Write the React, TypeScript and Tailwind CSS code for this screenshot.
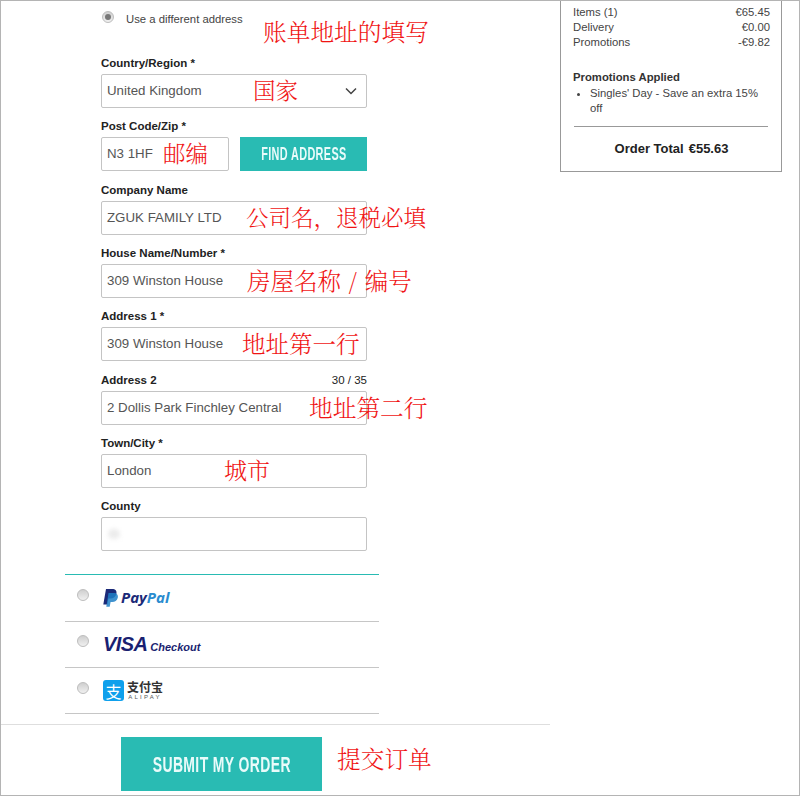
import React from "react";

const arial = "font-['Liberation_Sans',Arial,sans-serif]";
const labelCls = "h-[18px] w-[266px] flex items-start justify-between text-[11.5px] font-bold leading-[14px] text-[#222]";
const inputCls = "h-[34px] w-[266px] flex items-center rounded-[2px] border border-[#c4c4c4] bg-white px-[5px] text-[13.3px] text-[#555]";
const noteBase = "absolute text-[#f01414] whitespace-nowrap font-['Noto_Serif_CJK_SC','Noto_Sans_CJK_SC',sans-serif] font-light leading-none";

function Field({ label, value, right, children }: { label: string; value?: string; right?: string; children?: React.ReactNode }) {
  return (
    <div className="flex flex-col">
      <div className={labelCls}>
        <span>{label}</span>
        {right && <span className="font-normal text-[#222]">{right}</span>}
      </div>
      <div className={inputCls}>{value}{children}</div>
    </div>
  );
}

function Radio({ checked }: { checked?: boolean }) {
  return (
    <span className="flex h-[12px] w-[12px] shrink-0 items-center justify-center rounded-full border border-[#bdbdbd] bg-gradient-to-b from-[#cfcfcf] to-[#f0f0f0]">
      {checked && <span className="h-[6px] w-[6px] rounded-full bg-[#777]" />}
    </span>
  );
}

function PayRow({ children, radioTop }: { children: React.ReactNode; radioTop: string }) {
  return (
    <div className="flex h-[46.33px] border-b border-[#c6c6c6] pl-[12px]">
      <div className={radioTop}><Radio /></div>
      <div className="ml-[14px] flex items-center">{children}</div>
    </div>
  );
}

export default function App() {
  return (
    <div className={`relative h-[796px] w-[800px] overflow-hidden border border-[#b4b4b4] bg-white ${arial}`}>
      <div className="flex items-start">
        {/* left column */}
        <div className="w-[548px]">
          <div className="flex items-start pl-[101px] pt-[10px]">
            <Radio checked />
            <span className="ml-[12px] mt-[1px] text-[11.3px] leading-[14px] text-[#444]">Use a different address</span>
          </div>
          <div className="mt-[30px] flex flex-col gap-[11.33px] pl-[100px]">
            <div className="flex flex-col">
              <div className={labelCls}><span>Country/Region *</span></div>
              <div className={`${inputCls} justify-between`}>
                <span>United Kingdom</span>
                <svg width="12" height="8" viewBox="0 0 12 8" className="mr-[4px]" fill="none" stroke="#444" strokeWidth="1.5"><path d="M1 1.5 6 6.5 11 1.5" /></svg>
              </div>
            </div>
            <div className="flex flex-col">
              <div className={labelCls}><span>Post Code/Zip *</span></div>
              <div className="flex gap-[11px]">
                <div className={`${inputCls} !w-[128px]`}>N3 1HF</div>
                <div className="flex h-[34px] w-[127px] items-center justify-center overflow-hidden bg-[#29bbb3] text-[#e9fbfa]">
                  <span className="scale-x-[0.62] whitespace-nowrap text-[17.5px] font-bold tracking-[0.6px]">FIND ADDRESS</span>
                </div>
              </div>
            </div>
            <Field label="Company Name" value="ZGUK FAMILY LTD" />
            <Field label="House Name/Number *" value="309 Winston House" />
            <Field label="Address 1 *" value="309 Winston House" />
            <Field label="Address 2" right="30 / 35" value="2 Dollis Park Finchley Central" />
            <Field label="Town/City *" value="London" />
            <Field label="County">
              <span className="ml-[1px] h-[10px] w-[12px] rounded-full bg-[#ececec] blur-[2px]" />
            </Field>
          </div>

          <div className="ml-[64px] mt-[23px] w-[314px]">
            <div className="h-[1px] bg-[#29bbb3]" />
            <PayRow radioTop="mt-[14px]">
              <span className="flex items-center gap-[3px]">
                <svg width="15" height="18" viewBox="0 0 15 18">
                  <path d="M3 0h6c3.600 0 5 2 4.400 4.800C12.700 8 10.500 9.600 7.500 9.600H5.400L4.400 15.500H0.300Z" fill="#1b2a78" />
                  <path d="M5.500 4h6.800c2.300 1 3 2.800 2.400 5-.7 2.800-2.800 4-5.400 4H7.600L6.700 17.800H3.300L5.500 4Z" fill="#1f7fc6" fillOpacity=".85" />
                </svg>
                <span className="font-['Open_Sans',sans-serif] text-[15px] font-bold italic leading-none"><span className="text-[#1b2a78]">Pay</span><span className="text-[#2a8ccf]">Pal</span></span>
              </span>
            </PayRow>
            <PayRow radioTop="mt-[13px]">
              <span className="flex items-baseline gap-[3px] italic text-[#1a1f71]">
                <span className="text-[20px] font-bold leading-none tracking-[-0.6px]">VISA</span>
                <span className="text-[11px] font-bold leading-none">Checkout</span>
              </span>
            </PayRow>
            <PayRow radioTop="mt-[14px]">
              <span className="flex items-center gap-[3px]">
                <span className="flex h-[21px] w-[21px] items-center justify-center rounded-[3px] bg-[#0fa0ec] font-['Noto_Sans_CJK_SC',sans-serif] text-[16px] leading-none text-white">支</span>
                <span className="flex flex-col items-center">
                  <span className="font-['Noto_Sans_CJK_SC',sans-serif] text-[12px] font-bold leading-[12px] text-[#333]">支付宝</span>
                  <span className="mt-[1px] text-[6px] leading-[7px] tracking-[2.2px] text-[#555]">ALIPAY</span>
                </span>
              </span>
            </PayRow>
          </div>

          <div className="mt-[10px] w-[549px] border-t border-[#dedede] pb-[4px] pl-[120px] pt-[12px]">
            <div className="flex h-[54px] w-[201px] items-center justify-center overflow-hidden bg-[#29bbb3] text-[#e9fbfa]">
              <span className="scale-x-[0.635] whitespace-nowrap text-[22px] font-bold tracking-[0.6px]">SUBMIT MY ORDER</span>
            </div>
          </div>
        </div>

        {/* summary */}
        <div className="ml-[11px] h-[171px] w-[222px] border-x border-b border-[#999] pl-[12px] pr-[11px] pt-[4px] text-[11.3px] leading-[15px] text-[#444]">
          <div className="flex justify-between"><span>Items (1)</span><span>€65.45</span></div>
          <div className="flex justify-between"><span>Delivery</span><span>€0.00</span></div>
          <div className="flex justify-between"><span>Promotions</span><span>-€9.82</span></div>
          <div className="mt-[20px] font-bold text-[#333]">Promotions Applied</div>
          <ul className="mt-[1px] list-disc pl-[17px]">
            <li>Singles' Day - Save an extra 15% off</li>
          </ul>
          <div className="ml-[1px] mr-[2px] mt-[10px] border-t border-[#999]" />
          <div className="mt-[14px] flex justify-center gap-[5px] text-[13px] font-bold text-[#222]"><span>Order Total</span><span>€55.63</span></div>
        </div>
      </div>

      {/* hand-added red annotations */}
      <span className={`${noteBase} left-[262px] top-[19px] text-[23.7px]`}>账单地址的填写</span>
      <span className={`${noteBase} left-[252px] top-[77px] text-[22.5px]`}>国家</span>
      <span className={`${noteBase} left-[162px] top-[140px] text-[22.5px]`}>邮编</span>
      <span className={`${noteBase} left-[245px] top-[204px] text-[22.5px]`}>公司名，退税必填</span>
      <span className={`${noteBase} left-[246px] top-[268px] text-[23.5px]`}>房屋名称{"\u2004/\u2004"}编号</span>
      <span className={`${noteBase} left-[241px] top-[331px] text-[23.5px]`}>地址第一行</span>
      <span className={`${noteBase} left-[308px] top-[395px] text-[23.7px]`}>地址第二行</span>
      <span className={`${noteBase} left-[223px] top-[457px] text-[23px]`}>城市</span>
      <span className={`${noteBase} left-[336px] top-[746px] text-[23.7px]`}>提交订单</span>
    </div>
  );
}
